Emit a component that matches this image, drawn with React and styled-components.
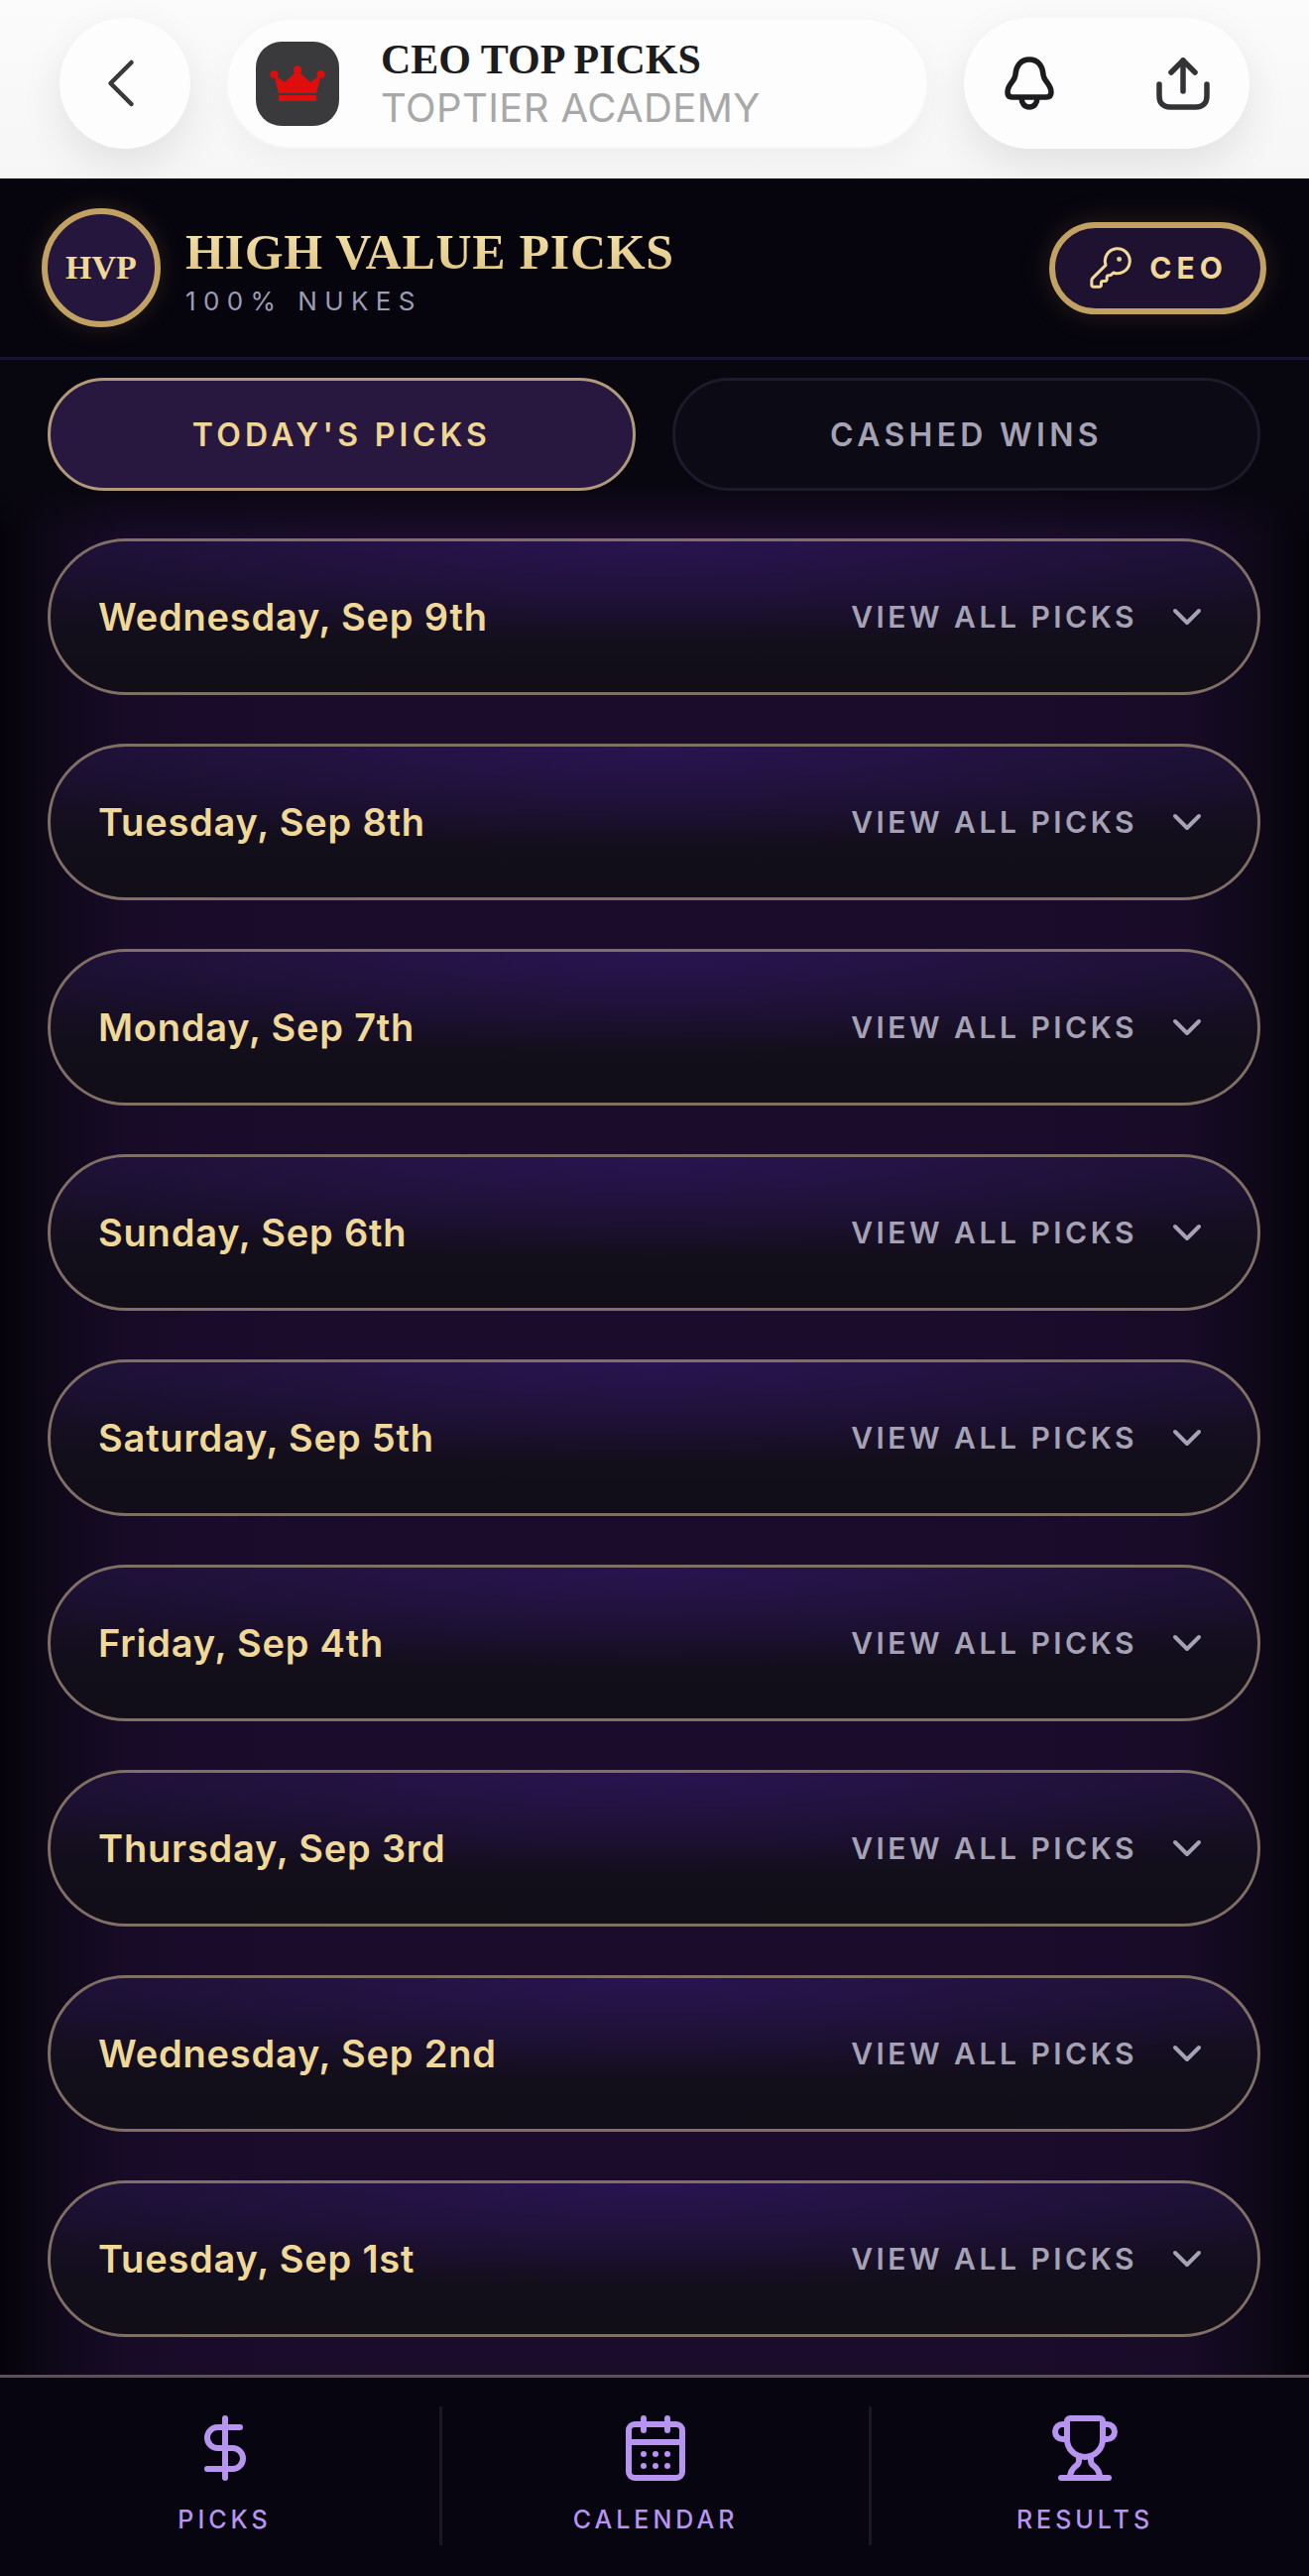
import React from "react";
import styled, { createGlobalStyle } from "styled-components";
import { ChevronDown, ChevronLeft, DollarSign, CalendarDays, Trophy, KeyRound } from "lucide-react";

const GlobalStyle = createGlobalStyle`
  html, body {
    margin: 0;
    padding: 0;
    background: #06040c;
  }
  * {
    box-sizing: border-box;
  }
`;

const Page = styled.div`
  width: 1320px;
  height: 2598px;
  display: flex;
  flex-direction: column;
  overflow: hidden;
  font-family: "Inter", "Liberation Sans", sans-serif;
`;

const BrowserBar = styled.div`
  height: 180px;
  flex: none;
  display: flex;
  align-items: flex-start;
  gap: 36px;
  padding: 18px 60px 0;
  background: linear-gradient(#fbfbfb, #f6f6f6);
`;

const BarPill = styled.div`
  height: 132px;
  border-radius: 66px;
  background: #fdfdfd;
  box-shadow: 0 16px 44px rgba(0, 0, 0, 0.09);
  display: flex;
  align-items: center;
`;

const BackButton = styled(BarPill)`
  width: 132px;
  justify-content: center;
  padding-right: 8px;
  color: #3a3a3c;
`;

const TitlePill = styled(BarPill)`
  width: 708px;
  padding-left: 28px;
  gap: 42px;
  border: 2px solid #f7f7f7;
  box-shadow: 0 10px 30px rgba(0, 0, 0, 0.04);
`;

const AppIcon = styled.div`
  width: 84px;
  height: 85px;
  border-radius: 26px;
  background: #3a3a3c;
  display: flex;
  align-items: center;
  justify-content: center;
`;

const TitleText = styled.div`
  display: flex;
  flex-direction: column;
  gap: 2px;
`;

const SiteName = styled.div`
  font-family: "Liberation Serif", serif;
  font-weight: 700;
  font-size: 42px;
  line-height: 48px;
  color: #1c1c1e;
`;

const SiteOwner = styled.div`
  font-size: 40px;
  line-height: 46px;
  letter-spacing: 0.4px;
  color: #a8a8a8;
`;

const ActionsPill = styled(BarPill)`
  width: 288px;
  margin-left: auto;
  justify-content: space-between;
  padding: 0 40px 0 41px;
`;

const Header = styled.header`
  height: 183px;
  flex: none;
  display: flex;
  align-items: center;
  padding: 0 43px 0 42px;
  gap: 25px;
  background: #06040d;
  border-bottom: 3px solid #1a1430;
`;

const Badge = styled.div`
  width: 120px;
  height: 120px;
  flex: none;
  border-radius: 50%;
  border: 6px solid #c2a263;
  background: #24163d;
  box-shadow: 0 0 26px rgba(194, 162, 99, 0.18);
  display: flex;
  align-items: center;
  justify-content: center;
  font-family: "Liberation Serif", serif;
  font-size: 34px;
  font-weight: 700;
  color: #f0d898;
`;

const Brand = styled.div`
  display: flex;
  flex-direction: column;
  flex: 1;
  gap: 5px;
  padding-top: 5px;
`;

const BrandTitle = styled.div`
  font-family: "Liberation Serif", serif;
  font-weight: 700;
  font-size: 50px;
  line-height: 58px;
  letter-spacing: 0.7px;
  background: linear-gradient(#f8e6ae, #dcc07f);
  -webkit-background-clip: text;
  background-clip: text;
  color: transparent;
`;

const BrandSub = styled.div`
  font-size: 26px;
  line-height: 32px;
  letter-spacing: 7.4px;
  color: #9c9cb5;
`;

const RoleButton = styled.div`
  width: 219px;
  height: 93px;
  border-radius: 47px;
  border: 6px solid #c2a263;
  background: #1f1230;
  box-shadow: 0 0 30px rgba(194, 162, 99, 0.18);
  display: flex;
  align-items: center;
  justify-content: center;
  gap: 16px;
  font-size: 30px;
  font-weight: 700;
  letter-spacing: 5px;
  color: #f0d898;
`;

const Content = styled.main`
  flex: 1;
  display: flex;
  flex-direction: column;
  padding: 18px 49px 0 48px;
  background:
    linear-gradient(#08060f 125px, rgba(8, 6, 15, 0) 178px),
    linear-gradient(
      90deg,
      #05030a 0,
      #0e0818 50px,
      #180b28 130px,
      #1b0c2c 400px,
      #1b0c2c 920px,
      #180b28 1190px,
      #0e0818 1270px,
      #05030a 1320px
    );
`;

const Tabs = styled.div`
  display: flex;
  gap: 37px;
  margin-bottom: 48px;
`;

const Tab = styled.div`
  flex: 1;
  height: 114px;
  border-radius: 57px;
  display: flex;
  align-items: center;
  justify-content: center;
  font-size: 32px;
  font-weight: 600;
  letter-spacing: 4.3px;
  border: 3px solid ${(p) => (p.$active ? "#b09a7a" : "#1d1a2c")};
  background: ${(p) => (p.$active ? "#28183f" : "#0c0a14")};
  color: ${(p) => (p.$active ? "#efd693" : "#a5a2b5")};
`;

const DayList = styled.div`
  display: flex;
  flex-direction: column;
  gap: 49px;
`;

const DayCard = styled.div`
  height: 158px;
  border-radius: 79px;
  border: 3px solid #7f6f64;
  display: flex;
  align-items: center;
  justify-content: space-between;
  padding: 0 47px 0 48px;
  background:
    radial-gradient(ellipse 62% 68% at 50% 0, #29144f, rgba(41, 20, 79, 0)),
    linear-gradient(#1b1030 0, #120e1a 66%, #110e18 100%);
`;

const DayName = styled.span`
  font-size: 38px;
  font-weight: 600;
  letter-spacing: 0.8px;
  color: #f0d898;
`;

const DayAction = styled.div`
  display: flex;
  align-items: center;
  gap: 26px;
  font-size: 30px;
  font-weight: 600;
  letter-spacing: 3.5px;
  color: #a5a2b5;
`;

const BottomNav = styled.nav`
  height: 203px;
  flex: none;
  display: grid;
  grid-template-columns: repeat(3, 433px);
  padding: 29px 11px 0 10px;
  background: #07050f;
  border-top: 3px solid #5d5058;
`;

const NavItem = styled.div`
  height: 140px;
  padding-top: 6px;
  display: flex;
  flex-direction: column;
  align-items: center;
  gap: 21px;
  color: #b794f0;
  font-size: 25px;
  font-weight: 500;
  letter-spacing: 4px;
  line-height: 30px;
  border-left: ${(p) => (p.$divided ? "3px solid #1b1823" : "0")};
`;

const days = [
  "Wednesday, Sep 9th",
  "Tuesday, Sep 8th",
  "Monday, Sep 7th",
  "Sunday, Sep 6th",
  "Saturday, Sep 5th",
  "Friday, Sep 4th",
  "Thursday, Sep 3rd",
  "Wednesday, Sep 2nd",
  "Tuesday, Sep 1st",
];

const navItems = [
  { label: "PICKS", Icon: DollarSign },
  { label: "CALENDAR", Icon: CalendarDays },
  { label: "RESULTS", Icon: Trophy },
];

const Crown = () => (
  <svg width="56" height="36" viewBox="0 0 56 36" fill="#e00d0d">
    <circle cx="4.5" cy="9" r="4" />
    <circle cx="28" cy="4.5" r="4" />
    <circle cx="51.5" cy="9" r="4" />
    <path d="M4 9 L15 17 L28 5 L41 17 L52 9 L47 28 H9 Z" />
    <rect x="9" y="30" width="38" height="6" />
  </svg>
);

const Bell = () => (
  <svg width="50" height="54" viewBox="0 0 50 54" fill="none" stroke="#1c1c1e" strokeWidth="5.5" strokeLinejoin="round">
    <path d="M25 3 C16 3 11.5 10 11 18 C10.6 25 3 28 3 36 C3 39.5 5 41 8 41 H42 C45 41 47 39.5 47 36 C47 28 39.4 25 39 18 C38.5 10 34 3 25 3 Z" />
    <path d="M17 41 C17 47 20 51 25 51 C30 51 33 47 33 41" />
  </svg>
);

const Share = () => (
  <svg width="54" height="54" viewBox="0 0 54 54" fill="none" stroke="#333336" strokeWidth="5.5" strokeLinecap="round" strokeLinejoin="round">
    <path d="M27 35 V4" />
    <path d="M15 16 L27 4 L39 16" />
    <path d="M3 28 V40 C3 47 7 51 14 51 H40 C47 51 51 47 51 40 V28" />
  </svg>
);

const App = () => {
  return (
    <Page>
      <GlobalStyle />
      <BrowserBar>
        <BackButton>
          <ChevronLeft size={84} strokeWidth={1.3} />
        </BackButton>
        <TitlePill>
          <AppIcon>
            <Crown />
          </AppIcon>
          <TitleText>
            <SiteName>CEO TOP PICKS</SiteName>
            <SiteOwner>TOPTIER ACADEMY</SiteOwner>
          </TitleText>
        </TitlePill>
        <ActionsPill>
          <Bell />
          <Share />
        </ActionsPill>
      </BrowserBar>

      <Header>
        <Badge>HVP</Badge>
        <Brand>
          <BrandTitle>HIGH VALUE PICKS</BrandTitle>
          <BrandSub>100% NUKES</BrandSub>
        </Brand>
        <RoleButton>
          <KeyRound size={46} strokeWidth={1.6} />
          CEO
        </RoleButton>
      </Header>

      <Content>
        <Tabs>
          <Tab $active>TODAY'S PICKS</Tab>
          <Tab>CASHED WINS</Tab>
        </Tabs>
        <DayList>
          {days.map((day) => (
            <DayCard key={day}>
              <DayName>{day}</DayName>
              <DayAction>
                VIEW ALL PICKS
                <ChevronDown size={48} strokeWidth={2} />
              </DayAction>
            </DayCard>
          ))}
        </DayList>
      </Content>

      <BottomNav>
        {navItems.map(({ label, Icon }, i) => (
          <NavItem key={label} $divided={i > 0}>
            <Icon size={72} strokeWidth={2} />
            {label}
          </NavItem>
        ))}
      </BottomNav>
    </Page>
  );
};

export default App;
